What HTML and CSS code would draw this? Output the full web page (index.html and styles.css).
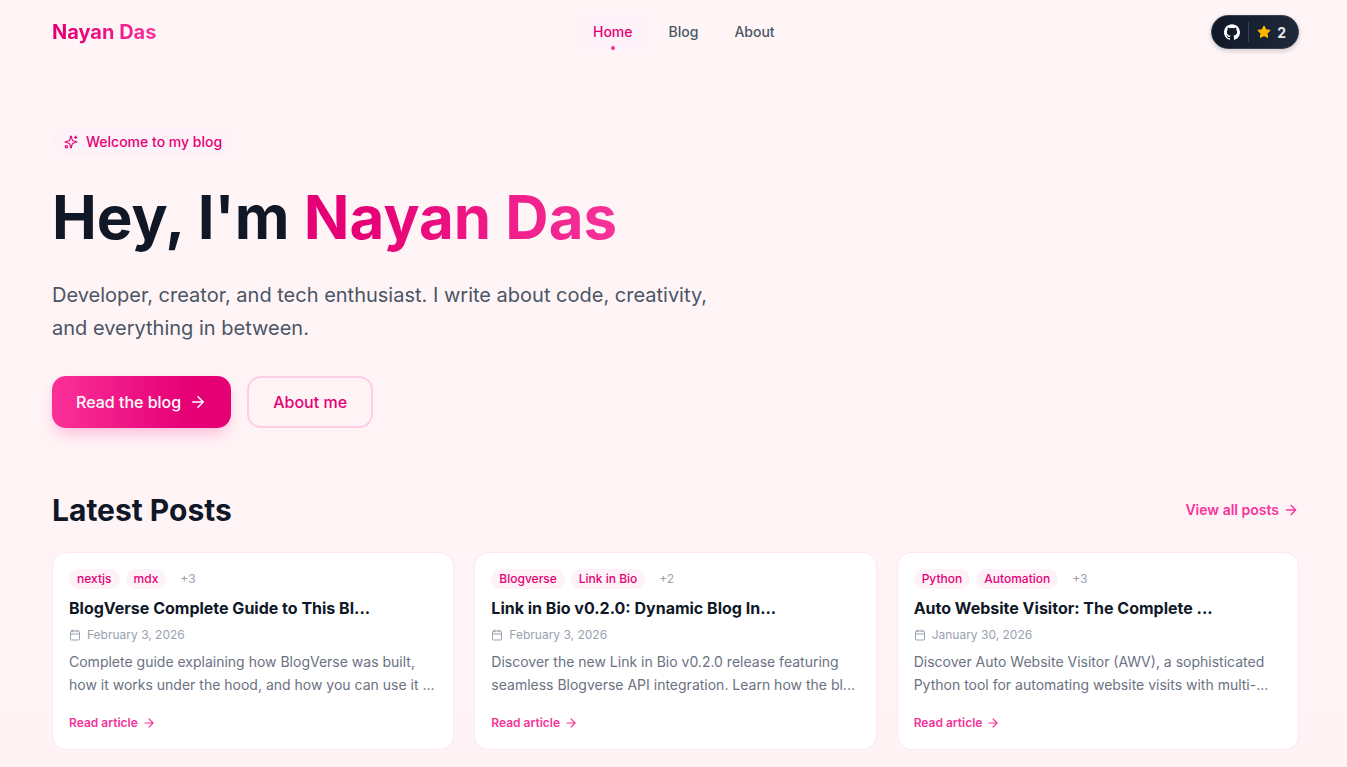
FILE: index.html
```html
<!DOCTYPE html>
<html lang="en">
  <head>
    <meta charset="UTF-8" />
    <meta name="viewport" content="width=device-width, initial-scale=1.0" />
    <title>Nayan Das</title>
    <link rel="stylesheet" href="styles.css">
  </head>
  <body>
    <!-- Shared icons -->
    <svg width="0" height="0" class="sprite">
      <defs>
        <symbol id="arrow" viewBox="0 0 24 24">
          <path d="M5 12h14M12 5l7 7-7 7" />
        </symbol>
        <symbol id="calendar" viewBox="0 0 24 24">
          <path d="M8 2v4M16 2v4M3 10h18" />
          <rect x="3" y="4" width="18" height="18" rx="2" />
        </symbol>
      </defs>
    </svg>

    <header class="header container">
      <a href="#" class="logo gradient-text">Nayan Das</a>
      <nav class="nav">
        <a href="#" class="nav-link active">Home</a>
        <a href="#" class="nav-link">Blog</a>
        <a href="#" class="nav-link">About</a>
      </nav>
      <a href="#" class="github" aria-label="GitHub, 2 stars">
        <svg class="github-icon" viewBox="0 0 24 24">
          <path d="M12 .297c-6.63 0-12 5.373-12 12 0 5.303 3.438 9.8 8.205 11.385.6.113.82-.258.82-.577 0-.285-.01-1.04-.015-2.04-3.338.724-4.042-1.61-4.042-1.61C4.422 18.07 3.633 17.7 3.633 17.7c-1.087-.744.084-.729.084-.729 1.205.084 1.838 1.236 1.838 1.236 1.07 1.835 2.809 1.305 3.495.998.108-.776.417-1.305.76-1.605-2.665-.3-5.466-1.332-5.466-5.93 0-1.31.465-2.38 1.235-3.22-.135-.303-.54-1.523.105-3.176 0 0 1.005-.322 3.3 1.23.96-.267 1.98-.399 3-.405 1.02.006 2.04.138 3 .405 2.28-1.552 3.285-1.23 3.285-1.23.645 1.653.24 2.873.12 3.176.765.84 1.23 1.91 1.23 3.22 0 4.61-2.805 5.625-5.475 5.92.42.36.81 1.096.81 2.22 0 1.606-.015 2.896-.015 3.286 0 .315.21.69.825.57C20.565 22.092 24 17.592 24 12.297c0-6.627-5.373-12-12-12" />
        </svg>
        <span class="divider"></span>
        <svg class="star-icon" viewBox="0 0 24 24">
          <path d="M12 2l3.09 6.26L22 9.27l-5 4.87 1.18 6.88L12 17.77l-6.18 3.25L7 14.14 2 9.27l6.91-1.01L12 2z" />
        </svg>
        <span>2</span>
      </a>
    </header>

    <main class="container">
      <section class="hero">
        <p class="badge">
          <svg class="icon icon-sm" viewBox="0 0 24 24">
            <path d="M9.94 15.5A2 2 0 0 0 8.5 14.06l-6.13-1.58a.5.5 0 0 1 0-.96L8.5 9.94A2 2 0 0 0 9.94 8.5l1.58-6.13a.5.5 0 0 1 .96 0l1.58 6.13a2 2 0 0 0 1.44 1.44l6.13 1.58a.5.5 0 0 1 0 .96l-6.13 1.58a2 2 0 0 0-1.44 1.44l-1.58 6.13a.5.5 0 0 1-.96 0z" />
            <path d="M20 2v4M22 4h-4" />
            <circle cx="4" cy="20" r="2" />
          </svg>
          Welcome to my blog
        </p>
        <h1>Hey, I'm <span class="gradient-text">Nayan Das</span></h1>
        <p class="intro">Developer, creator, and tech enthusiast. I write about code, creativity, and everything in between.</p>
        <div class="actions">
          <a href="#" class="btn btn-primary">Read the blog
            <svg class="icon icon-lg"><use href="#arrow" /></svg>
          </a>
          <a href="#" class="btn btn-outline">About me</a>
        </div>
      </section>

      <section>
        <div class="section-head">
          <h2>Latest Posts</h2>
          <a href="#" class="view-all">View all posts
            <svg class="icon icon-md"><use href="#arrow" /></svg>
          </a>
        </div>
        <div class="posts">
          <article class="card">
            <div class="tags">
              <span class="tag">nextjs</span>
              <span class="tag">mdx</span>
              <span class="more">+3</span>
            </div>
            <h3>BlogVerse Complete Guide to This Bl...</h3>
            <p class="date"><svg class="icon icon-xs"><use href="#calendar" /></svg>February 3, 2026</p>
            <p class="excerpt">Complete guide explaining how BlogVerse was built,<br>how it works under the hood, and how you can use it ...</p>
            <a href="#" class="read">Read article <svg class="icon icon-sm"><use href="#arrow" /></svg></a>
          </article>
          <article class="card">
            <div class="tags">
              <span class="tag">Blogverse</span>
              <span class="tag">Link in Bio</span>
              <span class="more">+2</span>
            </div>
            <h3>Link in Bio v0.2.0: Dynamic Blog In...</h3>
            <p class="date"><svg class="icon icon-xs"><use href="#calendar" /></svg>February 3, 2026</p>
            <p class="excerpt">Discover the new Link in Bio v0.2.0 release featuring<br>seamless Blogverse API integration. Learn how the bl...</p>
            <a href="#" class="read">Read article <svg class="icon icon-sm"><use href="#arrow" /></svg></a>
          </article>
          <article class="card">
            <div class="tags">
              <span class="tag">Python</span>
              <span class="tag">Automation</span>
              <span class="more">+3</span>
            </div>
            <h3>Auto Website Visitor: The Complete ...</h3>
            <p class="date"><svg class="icon icon-xs"><use href="#calendar" /></svg>January 30, 2026</p>
            <p class="excerpt">Discover Auto Website Visitor (AWV), a sophisticated<br>Python tool for automating website visits with multi-...</p>
            <a href="#" class="read">Read article <svg class="icon icon-sm"><use href="#arrow" /></svg></a>
          </article>
        </div>
      </section>
    </main>
  </body>
</html>
```
FILE: styles.css
```css
* {
  box-sizing: border-box;
}

body {
  margin: 0;
  min-height: 100vh;
  font-family: Inter, "Liberation Sans", sans-serif;
  color: #101828;
  background: linear-gradient(to bottom, #fff5f6, #fff3f5);
}

h1,
h2,
h3,
p {
  margin: 0;
}

a {
  color: inherit;
  text-decoration: none;
}

.sprite {
  position: absolute;
}

.container {
  padding: 0 48px 0 52px;
}

.gradient-text {
  background: linear-gradient(to right, #e60076 20%, #f6339a);
  -webkit-background-clip: text;
  background-clip: text;
  color: transparent;
}

.icon {
  fill: none;
  stroke: currentColor;
  stroke-width: 2;
  stroke-linecap: round;
  stroke-linejoin: round;
  flex-shrink: 0;
}

.icon-xs {
  width: 12px;
  height: 12px;
}

.icon-sm {
  width: 14px;
  height: 14px;
}

.icon-md {
  width: 16px;
  height: 16px;
}

.icon-lg {
  width: 18px;
  height: 18px;
}

/* Header */
.header {
  display: flex;
  align-items: center;
  justify-content: space-between;
  height: 64px;
}

.logo {
  font-size: 20px;
  font-weight: 700;
}

.nav {
  display: flex;
  gap: 4px;
}

.nav-link {
  position: relative;
  padding: 8px 16px;
  border-radius: 12px;
  font-size: 14px;
  line-height: 20px;
  font-weight: 500;
  color: #4a5565;
}

.nav-link.active {
  color: #e60076;
  background: #fdf2f8;
}

.nav-link.active::after {
  content: "";
  position: absolute;
  bottom: 0;
  left: 50%;
  width: 4px;
  height: 4px;
  margin-left: -2px;
  border-radius: 50%;
  background: #f6339a;
}

.github {
  display: flex;
  align-items: center;
  gap: 8px;
  height: 34px;
  padding: 0 12px;
  border: 1px solid #364153;
  border-radius: 17px;
  background: linear-gradient(to right, #101828, #1e2939);
  box-shadow: 0 2px 5px rgba(16, 24, 40, 0.2);
  font-size: 14px;
  font-weight: 700;
  color: #e5e7eb;
}

.github-icon {
  width: 16px;
  height: 16px;
  fill: #fff;
}

.star-icon {
  width: 14px;
  height: 14px;
  margin-right: -2px;
  fill: #ffb900;
  stroke: #ffb900;
  stroke-width: 2;
  stroke-linejoin: round;
}

.divider {
  width: 1px;
  height: 20px;
  background: #364153;
}

/* Hero */
.hero {
  padding: 64px 0;
}

.badge {
  display: inline-flex;
  align-items: center;
  gap: 8px;
  padding: 4px 12px;
  border-radius: 14px;
  background: #fdf2f8;
  font-size: 14px;
  line-height: 20px;
  font-weight: 500;
  color: #e60076;
}

h1 {
  margin-top: 28px;
  font-size: 60px;
  line-height: 66px;
  font-weight: 700;
}

.intro {
  max-width: 672px;
  margin-top: 29px;
  font-size: 20px;
  line-height: 33px;
  color: #4a5565;
}

.actions {
  display: flex;
  gap: 16px;
  margin-top: 31px;
}

.btn {
  display: flex;
  align-items: center;
  gap: 8px;
  height: 52px;
  padding: 0 24px;
  border-radius: 14px;
  font-size: 16px;
  font-weight: 500;
}

.btn-primary {
  color: #fff;
  background: linear-gradient(to right, #fb3199, #e60076 75%);
  box-shadow: 0 8px 16px -4px rgba(246, 51, 154, 0.35);
}

.btn-outline {
  border: 2px solid #fccee8;
  color: #e60076;
}

/* Posts */
.section-head {
  display: flex;
  align-items: center;
  justify-content: space-between;
  margin-bottom: 24px;
}

h2 {
  font-size: 30px;
  line-height: 36px;
  font-weight: 700;
}

.view-all {
  display: flex;
  align-items: center;
  gap: 4px;
  font-size: 14px;
  line-height: 20px;
  font-weight: 600;
  color: #f6339a;
}

.posts {
  display: grid;
  grid-template-columns: repeat(3, 1fr);
  gap: 20px;
}

.card {
  padding: 16px;
  border: 1px solid #fce7f3;
  border-radius: 14px;
  background: #fff;
}

.tags {
  display: flex;
  align-items: center;
  gap: 6px;
}

.tag,
.more {
  padding: 2px 8px;
  border-radius: 10px;
  font-size: 12px;
  line-height: 16px;
}

.tag {
  font-weight: 500;
  color: #e60076;
  background: #fdf2f8;
}

.more {
  color: #99a1af;
}

h3 {
  margin-top: 8px;
  font-size: 16px;
  line-height: 22px;
  font-weight: 700;
}

.date {
  display: flex;
  align-items: center;
  gap: 6px;
  margin-top: 8px;
  font-size: 12px;
  line-height: 16px;
  color: #99a1af;
}

.excerpt {
  margin-top: 7px;
  font-size: 14px;
  line-height: 23px;
  color: #6a7282;
}

.read {
  display: flex;
  align-items: center;
  gap: 4px;
  width: fit-content;
  margin-top: 17px;
  font-size: 12px;
  line-height: 20px;
  font-weight: 600;
  color: #f6339a;
}
```
